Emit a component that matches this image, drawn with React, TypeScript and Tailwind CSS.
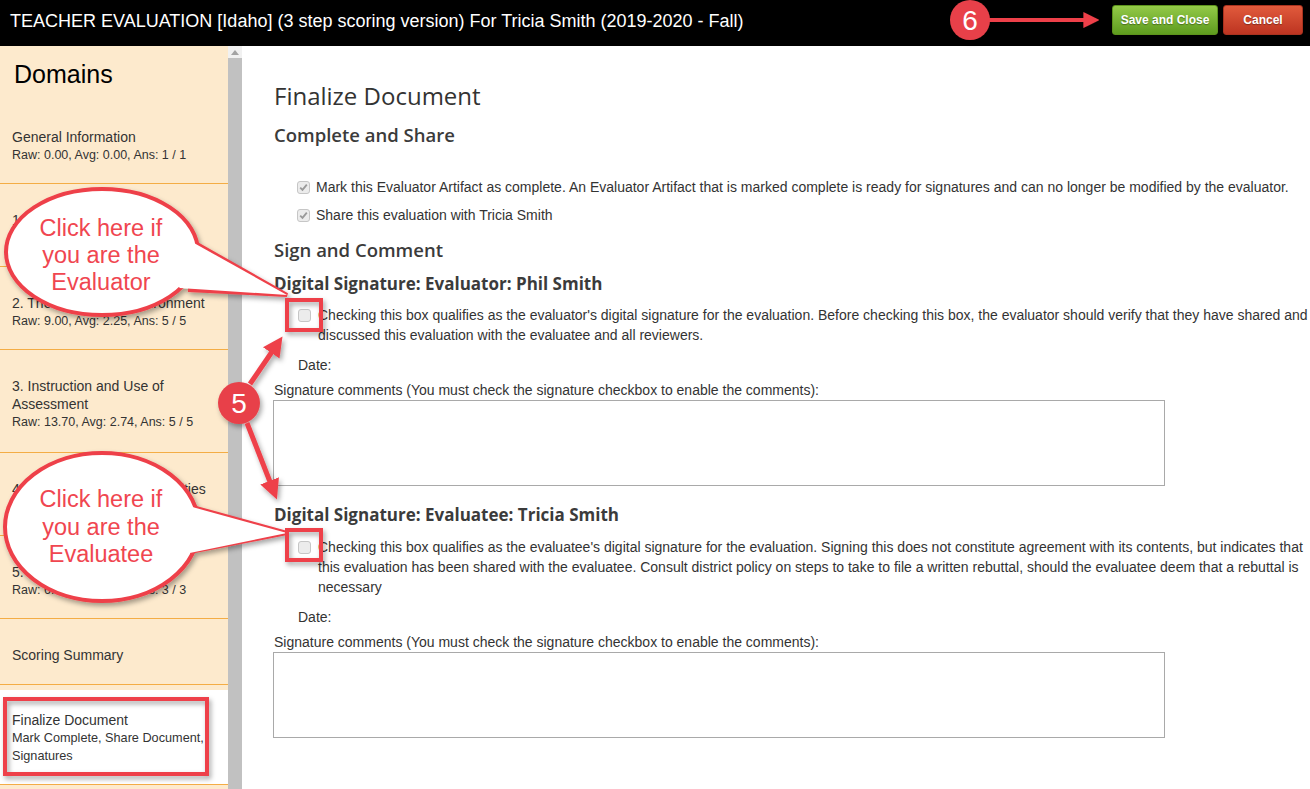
import React from 'react'

const RED = '#ee4049'

interface Domain {
  title: string[]
  stats?: string
  pb: string
}

const domains: Domain[] = [
  { title: ['General Information'], stats: 'Raw: 0.00, Avg: 0.00, Ans: 1 / 1', pb: 'pb-[19px]' },
  { title: ['1. Planning and Preparation'], stats: 'Raw: 9.00, Avg: 1.80, Ans: 5 / 5', pb: 'pb-[19px]' },
  { title: ['2. The Classroom Environment'], stats: 'Raw: 9.00, Avg: 2.25, Ans: 5 / 5', pb: 'pb-[19px]' },
  { title: ['3. Instruction and Use of', 'Assessment'], stats: 'Raw: 13.70, Avg: 2.74, Ans: 5 / 5', pb: 'pb-[21px]' },
  { title: ['4. Professional Responsibilities'], stats: 'Raw: 10.00, Avg: 2.00, Ans: 5 / 5', pb: 'pb-[19px]' },
  { title: ['5. Student Growth'], stats: 'Raw: 6.00, Avg: 2.00, Ans: 3 / 3', pb: 'pb-[19px]' },
  { title: ['Scoring Summary'], pb: 'pb-[20px]' },
]

function Box({ checked }: { checked?: boolean }) {
  return (
    <span className="flex h-[13px] w-[13px] shrink-0 items-center justify-center rounded-[3px] border border-[#c6c6c6] bg-[#ececec]">
      {checked && (
        <svg width="9" height="9" viewBox="0 0 9 9">
          <path d="M1.2 4.6 L3.5 6.9 L7.8 1.6" fill="none" stroke="#9a9a9a" strokeWidth="1.8" />
        </svg>
      )}
    </span>
  )
}

function Signature({ who, text, box }: { who: string; text: string; box: string }) {
  return (
    <div>
      <h3 className="font-['Open_Sans',sans-serif] text-[17px] font-bold leading-[20px] text-[#3b3b3b]">{who}</h3>
      <div className={`flex gap-[7px] pl-[24px] ${box}`}>
        <span className="pt-[4px]">
          <Box />
        </span>
        <p className="leading-[20px]">{text}</p>
      </div>
      <div className="mt-[10px] pl-[24px] leading-[20px]">Date:</div>
      <div className="mt-[5px] leading-[20px]">
        Signature comments (You must check the signature checkbox to enable the comments):
      </div>
      <div className="h-[86px] w-[892px] -translate-x-px border border-[#a9a9a9] bg-white" />
    </div>
  )
}

export default function App() {
  return (
    <div className="relative h-[789px] w-[1310px] overflow-hidden bg-white font-['Liberation_Sans',Arial,sans-serif] text-[14px] text-[#333]">
      {/* top bar */}
      <div className="flex h-[46px] bg-black pl-[10px] pr-[7px]">
        <div className="flex-1 self-center pb-[4px] text-[18px] text-white">
          TEACHER EVALUATION [Idaho] (3 step scoring version) For Tricia Smith (2019-2020 - Fall)
        </div>
        <div className="flex gap-[5px] pt-[5px]">
          <button className="h-[30px] w-[106px] rounded-[3px] border border-[#5c921b] bg-gradient-to-b from-[#93c947] to-[#5e9c1e] text-[12px] font-bold text-white [text-shadow:0_1px_1px_rgba(0,0,0,0.35)]">
            Save and Close
          </button>
          <button className="h-[30px] w-[80px] rounded-[3px] border border-[#a9321f] bg-gradient-to-b from-[#e15a3c] to-[#bd3421] text-[12px] font-bold text-white [text-shadow:0_1px_1px_rgba(0,0,0,0.35)]">
            Cancel
          </button>
        </div>
      </div>

      <div className="flex h-[743px]">
        {/* sidebar */}
        <div className="w-[228px] shrink-0 bg-[#fdeacd]">
          <div className="flex h-[55px] items-center pl-[14px] pt-[3px] text-[25px] text-black">Domains</div>
          {domains.map((d) => (
            <div key={d.title[0]} className={`border-b border-[#f4ad45] px-[12px] pt-[27px] leading-[18px] ${d.pb}`}>
              {d.title.map((t) => (
                <div key={t}>{t}</div>
              ))}
              {d.stats && <div className="text-[12.5px]">{d.stats}</div>}
            </div>
          ))}
          <div className="mt-[5px] border-b border-[#f4ad45] bg-white px-[12px] pb-[19px] pt-[21px] text-[12.7px] leading-[18px]">
            <div className="text-[14px]">Finalize Document</div>
            <div>Mark Complete, Share Document,</div>
            <div>Signatures</div>
          </div>
        </div>

        {/* scrollbar */}
        <div className="flex w-[14px] shrink-0 flex-col bg-[#c1c1c1]">
          <div className="flex h-[12px] items-center justify-center bg-[#f1f1f1]">
            <svg width="8" height="5" viewBox="0 0 8 5">
              <path d="M0 5 L4 0 L8 5 Z" fill="#a3a3a3" />
            </svg>
          </div>
        </div>

        {/* content */}
        <div className="flex-1 pl-[32px] pt-[36px]">
          <h1 className="font-['Open_Sans',sans-serif] text-[24px] leading-[28px] text-[#333]">Finalize Document</h1>
          <h2 className="mt-[14px] font-['Open_Sans',sans-serif] text-[18.5px] font-semibold leading-[22px] text-[#3b3b3b]">
            Complete and Share
          </h2>
          <div className="mt-[31px] flex items-center gap-[6px] pl-[23px] leading-[20px]">
            <Box checked />
            <span>
              Mark this Evaluator Artifact as complete. An Evaluator Artifact that is marked complete is ready for signatures and can no longer be modified by the evaluator.
            </span>
          </div>
          <div className="mt-[8px] flex items-center gap-[6px] pl-[23px] leading-[20px]">
            <Box checked />
            <span>Share this evaluation with Tricia Smith</span>
          </div>
          <h2 className="mt-[14px] font-['Open_Sans',sans-serif] text-[18.5px] font-semibold leading-[22px] text-[#3b3b3b]">
            Sign and Comment
          </h2>
          <div className="mt-[13px]">
            <Signature
              who="Digital Signature: Evaluator: Phil Smith"
              box="mt-[11px]"
              text="Checking this box qualifies as the evaluator's digital signature for the evaluation. Before checking this box, the evaluator should verify that they have shared and discussed this evaluation with the evaluatee and all reviewers."
            />
          </div>
          <div className="mt-[19px]">
            <Signature
              who="Digital Signature: Evaluatee: Tricia Smith"
              box="mt-[12px]"
              text="Checking this box qualifies as the evaluatee's digital signature for the evaluation. Signing this does not constitute agreement with its contents, but indicates that this evaluation has been shared with the evaluatee. Consult district policy on steps to take to file a written rebuttal, should the evaluatee deem that a rebuttal is necessary"
            />
          </div>
        </div>
      </div>

      {/* annotations */}
      <svg className="pointer-events-none absolute left-0 top-0" width="1310" height="789" viewBox="0 0 1310 789">
        <defs>
          <filter id="sh" x="-20%" y="-20%" width="140%" height="140%">
            <feDropShadow dx="2" dy="3" stdDeviation="2.5" floodColor="#000" floodOpacity="0.35" />
          </filter>
          <marker id="ah" viewBox="0 0 10 10" refX="6" refY="5" markerWidth="4" markerHeight="4" orient="auto">
            <path d="M0 0 L10 5 L0 10 Z" fill={RED} />
          </marker>
        </defs>

        <g filter="url(#sh)">
          {/* bubble 1 */}
          <ellipse cx="102" cy="252" rx="96" ry="63" fill="white" stroke={RED} strokeWidth="4" />
          <polyline points="197,244 287,295 188,290" fill="none" stroke={RED} strokeWidth="4" />
          <polygon points="185,238 287,295 180,288 160,270" fill="white" />
          {/* bubble 2 */}
          <ellipse cx="102" cy="527" rx="97" ry="74" fill="white" stroke={RED} strokeWidth="4" />
          <polyline points="196,508 287,533 190,552" fill="none" stroke={RED} strokeWidth="4" />
          <polygon points="185,505 287,533 180,555 160,530" fill="white" />

          {/* boxes */}
          <rect x="287" y="300" width="34" height="30" fill="none" stroke={RED} strokeWidth="4" />
          <rect x="287" y="530" width="34" height="30" fill="none" stroke={RED} strokeWidth="4" />
          <rect x="5" y="699" width="202" height="75" fill="none" stroke={RED} strokeWidth="4" />

          {/* arrows from 5 */}
          <line x1="250" y1="384" x2="278" y2="343" stroke={RED} strokeWidth="5" markerEnd="url(#ah)" />
          <line x1="247" y1="423" x2="274" y2="492" stroke={RED} strokeWidth="5" markerEnd="url(#ah)" />
          <circle cx="239" cy="403" r="21" fill="#e8414a" />

          {/* badge 6 */}
          <line x1="985" y1="20" x2="1093" y2="20" stroke={RED} strokeWidth="4" markerEnd="url(#ah)" />
          <circle cx="970" cy="20" r="20" fill="#e8414a" />
        </g>

        <g fontFamily="Liberation Sans, Arial, sans-serif" fill="#f04650" fontSize="23.5" textAnchor="middle">
          <text x="101" y="236">Click here if</text>
          <text x="101" y="263">you are the</text>
          <text x="101" y="290">Evaluator</text>
          <text x="101" y="507">Click here if</text>
          <text x="101" y="535">you are the</text>
          <text x="101" y="562">Evaluatee</text>
        </g>
        <g fontFamily="Liberation Sans, Arial, sans-serif" fill="white" fontSize="28" textAnchor="middle">
          <text x="239" y="413">5</text>
          <text x="970" y="30">6</text>
        </g>
      </svg>
    </div>
  )
}
